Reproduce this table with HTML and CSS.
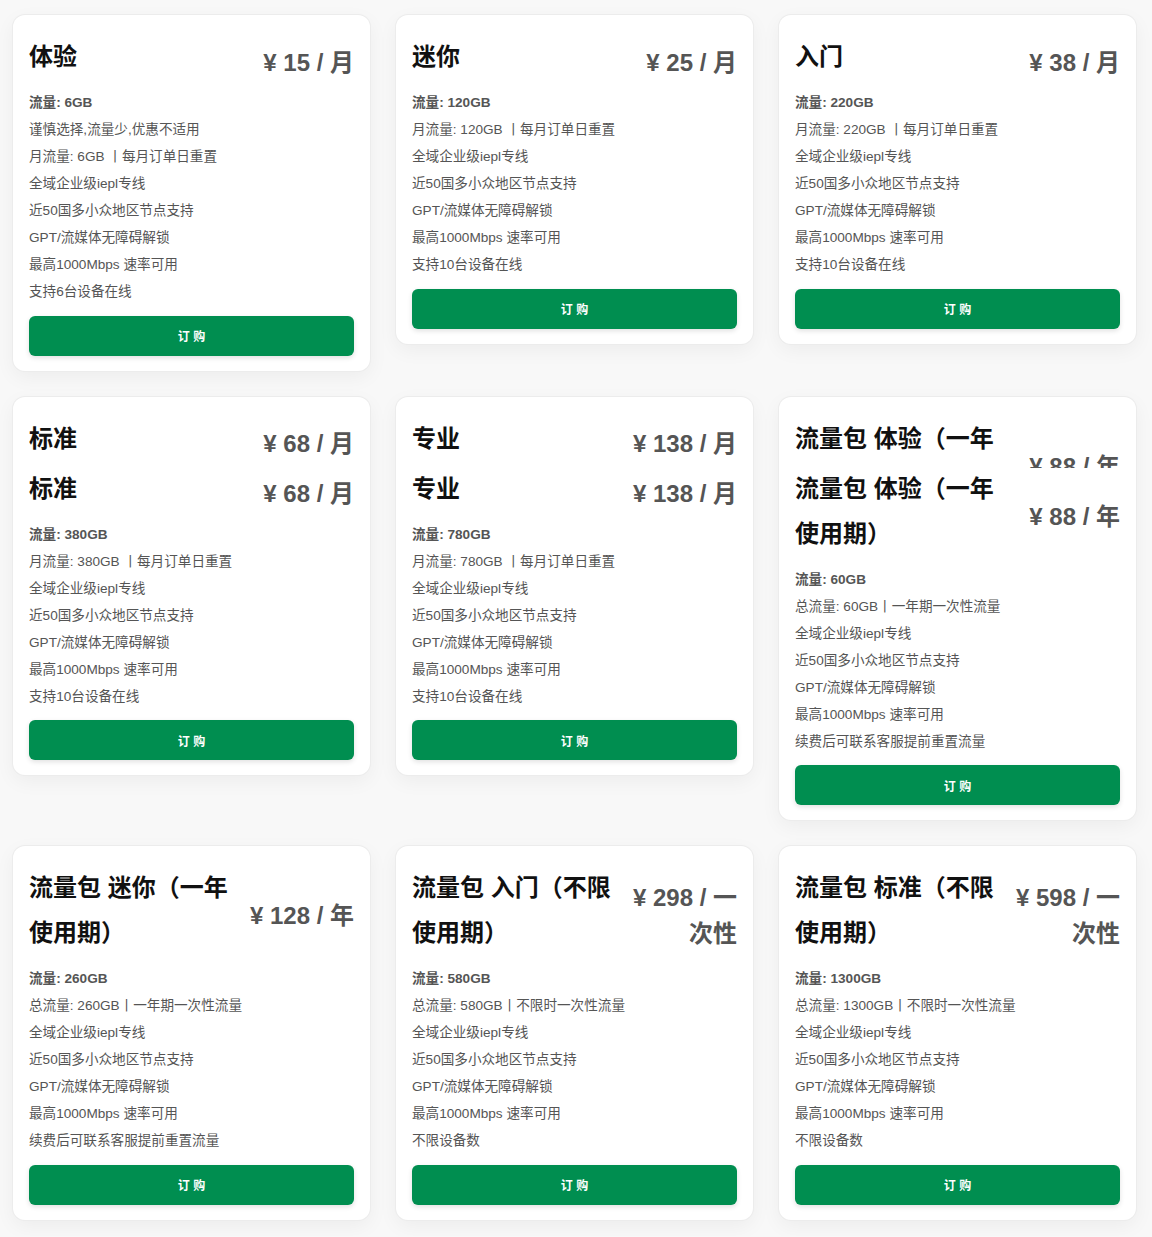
FILE: index.html
```html
<!DOCTYPE html>
<html lang="zh-CN">
<head>
  <meta charset="UTF-8" />
  <meta name="viewport" content="width=device-width, initial-scale=1.0"/>
  <title>订阅套餐</title>
  <link rel="stylesheet" href="styles.css">
</head>
<body>
  <main class="plans">

    <div class="plan">
      <div class="plan-head">
        <h3 class="plan-name">体验</h3>
        <div class="plan-price">¥ 15 / 月</div>
      </div>
      <ul class="plan-features">
        <li class="traffic">流量: 6GB</li>
        <li>谨慎选择,流量少,优惠不适用</li>
        <li>月流量: 6GB 丨每月订单日重置</li>
        <li>全域企业级iepl专线</li>
        <li>近50国多小众地区节点支持</li>
        <li>GPT/流媒体无障碍解锁</li>
        <li>最高1000Mbps 速率可用</li>
        <li>支持6台设备在线</li>
      </ul>
      <button class="btn-order">订 购</button>
    </div>

    <div class="plan">
      <div class="plan-head">
        <h3 class="plan-name">迷你</h3>
        <div class="plan-price">¥ 25 / 月</div>
      </div>
      <ul class="plan-features">
        <li class="traffic">流量: 120GB</li>
        <li>月流量: 120GB 丨每月订单日重置</li>
        <li>全域企业级iepl专线</li>
        <li>近50国多小众地区节点支持</li>
        <li>GPT/流媒体无障碍解锁</li>
        <li>最高1000Mbps 速率可用</li>
        <li>支持10台设备在线</li>
      </ul>
      <button class="btn-order">订 购</button>
    </div>

    <div class="plan">
      <div class="plan-head">
        <h3 class="plan-name">入门</h3>
        <div class="plan-price">¥ 38 / 月</div>
      </div>
      <ul class="plan-features">
        <li class="traffic">流量: 220GB</li>
        <li>月流量: 220GB 丨每月订单日重置</li>
        <li>全域企业级iepl专线</li>
        <li>近50国多小众地区节点支持</li>
        <li>GPT/流媒体无障碍解锁</li>
        <li>最高1000Mbps 速率可用</li>
        <li>支持10台设备在线</li>
      </ul>
      <button class="btn-order">订 购</button>
    </div>

    <div class="plan">
      <div class="plan-head-ghost">
        <div class="plan-head">
          <h3 class="plan-name">标准</h3>
          <div class="plan-price">¥ 68 / 月</div>
        </div>
      </div>
      <div class="plan-head">
        <h3 class="plan-name">标准</h3>
        <div class="plan-price">¥ 68 / 月</div>
      </div>
      <ul class="plan-features">
        <li class="traffic">流量: 380GB</li>
        <li>月流量: 380GB 丨每月订单日重置</li>
        <li>全域企业级iepl专线</li>
        <li>近50国多小众地区节点支持</li>
        <li>GPT/流媒体无障碍解锁</li>
        <li>最高1000Mbps 速率可用</li>
        <li>支持10台设备在线</li>
      </ul>
      <button class="btn-order">订 购</button>
    </div>

    <div class="plan">
      <div class="plan-head-ghost">
        <div class="plan-head">
          <h3 class="plan-name">专业</h3>
          <div class="plan-price">¥ 138 / 月</div>
        </div>
      </div>
      <div class="plan-head">
        <h3 class="plan-name">专业</h3>
        <div class="plan-price">¥ 138 / 月</div>
      </div>
      <ul class="plan-features">
        <li class="traffic">流量: 780GB</li>
        <li>月流量: 780GB 丨每月订单日重置</li>
        <li>全域企业级iepl专线</li>
        <li>近50国多小众地区节点支持</li>
        <li>GPT/流媒体无障碍解锁</li>
        <li>最高1000Mbps 速率可用</li>
        <li>支持10台设备在线</li>
      </ul>
      <button class="btn-order">订 购</button>
    </div>

    <div class="plan">
      <div class="plan-head-ghost">
        <div class="plan-head">
          <h3 class="plan-name">流量包 体验（一年使用期）</h3>
          <div class="plan-price">¥ 88 / 年</div>
        </div>
      </div>
      <div class="plan-head">
        <h3 class="plan-name">流量包 体验（一年使用期）</h3>
        <div class="plan-price">¥ 88 / 年</div>
      </div>
      <ul class="plan-features">
        <li class="traffic">流量: 60GB</li>
        <li>总流量: 60GB丨一年期一次性流量</li>
        <li>全域企业级iepl专线</li>
        <li>近50国多小众地区节点支持</li>
        <li>GPT/流媒体无障碍解锁</li>
        <li>最高1000Mbps 速率可用</li>
        <li>续费后可联系客服提前重置流量</li>
      </ul>
      <button class="btn-order">订 购</button>
    </div>

    <div class="plan">
      <div class="plan-head">
        <h3 class="plan-name">流量包 迷你（一年使用期）</h3>
        <div class="plan-price">¥ 128 / 年</div>
      </div>
      <ul class="plan-features">
        <li class="traffic">流量: 260GB</li>
        <li>总流量: 260GB丨一年期一次性流量</li>
        <li>全域企业级iepl专线</li>
        <li>近50国多小众地区节点支持</li>
        <li>GPT/流媒体无障碍解锁</li>
        <li>最高1000Mbps 速率可用</li>
        <li>续费后可联系客服提前重置流量</li>
      </ul>
      <button class="btn-order">订 购</button>
    </div>

    <div class="plan">
      <div class="plan-head">
        <h3 class="plan-name">流量包 入门（不限使用期）</h3>
        <div class="plan-price">¥ 298 / 一次性</div>
      </div>
      <ul class="plan-features">
        <li class="traffic">流量: 580GB</li>
        <li>总流量: 580GB丨不限时一次性流量</li>
        <li>全域企业级iepl专线</li>
        <li>近50国多小众地区节点支持</li>
        <li>GPT/流媒体无障碍解锁</li>
        <li>最高1000Mbps 速率可用</li>
        <li>不限设备数</li>
      </ul>
      <button class="btn-order">订 购</button>
    </div>

    <div class="plan">
      <div class="plan-head">
        <h3 class="plan-name">流量包 标准（不限使用期）</h3>
        <div class="plan-price">¥ 598 / 一次性</div>
      </div>
      <ul class="plan-features">
        <li class="traffic">流量: 1300GB</li>
        <li>总流量: 1300GB丨不限时一次性流量</li>
        <li>全域企业级iepl专线</li>
        <li>近50国多小众地区节点支持</li>
        <li>GPT/流媒体无障碍解锁</li>
        <li>最高1000Mbps 速率可用</li>
        <li>不限设备数</li>
      </ul>
      <button class="btn-order">订 购</button>
    </div>

  </main>
</body>
</html>
```

FILE: styles.css
```css
* { box-sizing: border-box; margin: 0; padding: 0; }
body {
  font-family: "Liberation Sans", "Noto Sans CJK SC", sans-serif;
  background: #f8f8f8;
  color: #555;
}

.plans {
  display: grid;
  grid-template-columns: repeat(3, 1fr);
  gap: 26px;
  align-items: start;
  padding: 15px 16px 16px 13px;
}

.plan {
  background: #fff;
  border-radius: 12px;
  padding: 19px 16px 15px;
  box-shadow: 0 0 0 1px #ececec, 0 6px 20px rgba(0,0,0,0.05);
}

.plan-head {
  display: flex;
  justify-content: space-between;
  align-items: center;
  margin-bottom: 10px;
}
.plan-head-ghost {
  height: 52px;
  overflow: hidden;
  margin-bottom: -2px;
}
.plan-name {
  max-width: 65%;
  font-size: 24px;
  line-height: 45px;
  font-weight: 700;
  color: #111;
}
.plan-price {
  max-width: 35%;
  margin: 6px 0 -6px;
  font-size: 24px;
  line-height: 1.5;
  font-weight: 700;
  text-align: right;
  color: #555;
}

.plan-features {
  list-style: none;
  font-size: 0.85rem;
  line-height: 27px;
}
.plan-features .traffic {
  font-weight: 700;
}

.btn-order {
  display: block;
  width: 100%;
  height: 40px;
  margin-top: 10.5px;
  border: none;
  border-radius: 6px;
  background: #008e50;
  color: #fff;
  font-family: inherit;
  font-size: 12px;
  font-weight: 700;
  cursor: pointer;
  box-shadow: 0 2px 5px rgba(0,0,0,0.12);
}
.btn-order:hover {
  background: #007a44;
}
```
